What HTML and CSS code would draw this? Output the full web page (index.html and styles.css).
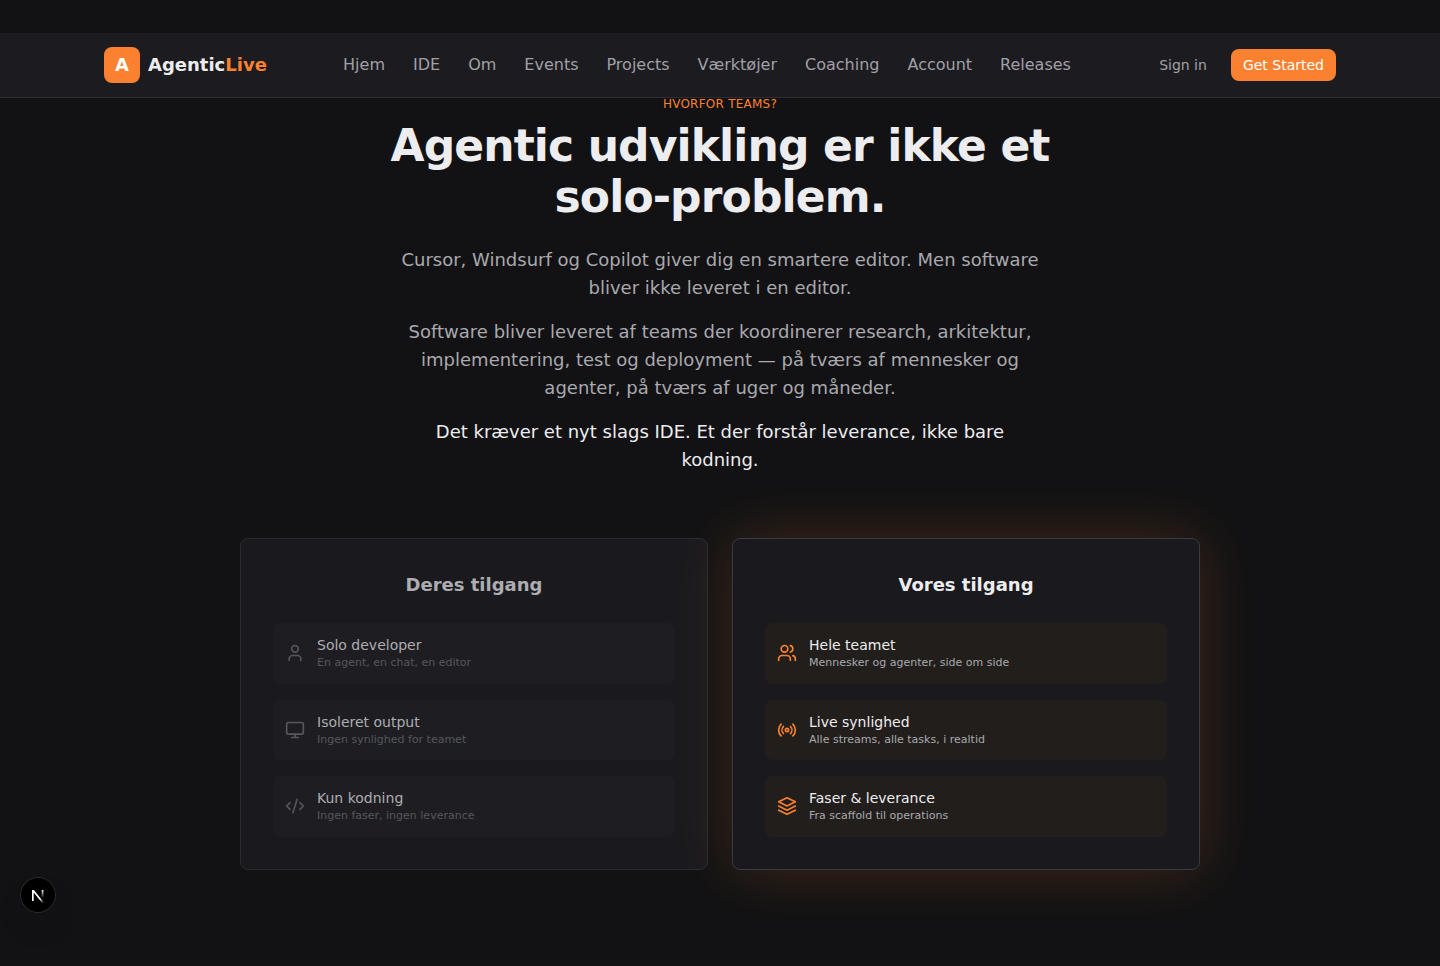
FILE: index.html
```html
<!DOCTYPE html>
<html lang="da">
  <head>
    <meta charset="UTF-8" />
    <meta name="viewport" content="width=device-width, initial-scale=1.0" />
    <title>AgenticLive</title>
    <link rel="stylesheet" href="styles.css">
  </head>

  <body>
    <header class="site-header">
      <div class="header-inner">
        <a href="#" class="brand">
          <span class="brand-mark">A</span>
          <span class="brand-name">Agentic<span class="accent">Live</span></span>
        </a>
        <nav class="main-nav">
          <a href="#">Hjem</a>
          <a href="#">IDE</a>
          <a href="#">Om</a>
          <a href="#">Events</a>
          <a href="#">Projects</a>
          <a href="#">Værktøjer</a>
          <a href="#">Coaching</a>
          <a href="#">Account</a>
          <a href="#">Releases</a>
        </nav>
        <div class="header-actions">
          <button type="button" class="btn btn-ghost">Sign in</button>
          <button type="button" class="btn btn-primary">Get Started</button>
        </div>
      </div>
    </header>

    <main class="why-teams">
      <div class="intro">
        <p class="eyebrow">HVORFOR TEAMS?</p>
        <h1>Agentic udvikling er ikke et solo-problem.</h1>
        <div class="intro-text">
          <p>Cursor, Windsurf og Copilot giver dig en smartere editor. Men software bliver ikke leveret i en editor.</p>
          <p>Software bliver leveret af teams der koordinerer research, arkitektur, implementering, test og deployment — på tværs af mennesker og agenter, på tværs af uger og måneder.</p>
          <p class="strong">Det kræver et nyt slags IDE. Et der forstår leverance, ikke bare kodning.</p>
        </div>
      </div>

      <div class="compare">
        <section class="card card-theirs">
          <h2>Deres tilgang</h2>
          <ul class="features">
            <li class="feature">
              <svg class="icon" viewBox="0 0 24 24"><path d="M19 21v-2a4 4 0 0 0-4-4H9a4 4 0 0 0-4 4v2" /><circle cx="12" cy="7" r="4" /></svg>
              <div>
                <p class="feature-title">Solo developer</p>
                <p class="feature-text">En agent, en chat, en editor</p>
              </div>
            </li>
            <li class="feature">
              <svg class="icon" viewBox="0 0 24 24"><rect x="2" y="3" width="20" height="14" rx="2" /><path d="M8 21h8M12 17v4" /></svg>
              <div>
                <p class="feature-title">Isoleret output</p>
                <p class="feature-text">Ingen synlighed for teamet</p>
              </div>
            </li>
            <li class="feature">
              <svg class="icon" viewBox="0 0 24 24"><path d="m18 16 4-4-4-4M6 8l-4 4 4 4M14.500 4l-5 16" /></svg>
              <div>
                <p class="feature-title">Kun kodning</p>
                <p class="feature-text">Ingen faser, ingen leverance</p>
              </div>
            </li>
          </ul>
        </section>

        <section class="card card-ours">
          <h2>Vores tilgang</h2>
          <ul class="features">
            <li class="feature">
              <svg class="icon" viewBox="0 0 24 24"><path d="M16 21v-2a4 4 0 0 0-4-4H6a4 4 0 0 0-4 4v2" /><circle cx="9" cy="7" r="4" /><path d="M22 21v-2a4 4 0 0 0-3-3.870M16 3.130a4 4 0 0 1 0 7.750" /></svg>
              <div>
                <p class="feature-title">Hele teamet</p>
                <p class="feature-text">Mennesker og agenter, side om side</p>
              </div>
            </li>
            <li class="feature">
              <svg class="icon" viewBox="0 0 24 24"><path d="M4.900 19.100C1 15.200 1 8.800 4.900 4.900M7.800 16.200c-2.300-2.300-2.300-6.100 0-8.500" /><circle cx="12" cy="12" r="2" /><path d="M16.200 7.800c2.300 2.300 2.300 6.100 0 8.500M19.100 4.900C23 8.800 23 15.100 19.100 19" /></svg>
              <div>
                <p class="feature-title">Live synlighed</p>
                <p class="feature-text">Alle streams, alle tasks, i realtid</p>
              </div>
            </li>
            <li class="feature">
              <svg class="icon" viewBox="0 0 24 24"><path d="M12 2 2 7l10 5 10-5-10-5z" /><path d="m2 12 10 5 10-5M2 17l10 5 10-5" /></svg>
              <div>
                <p class="feature-title">Faser &amp; leverance</p>
                <p class="feature-text">Fra scaffold til operations</p>
              </div>
            </li>
          </ul>
        </section>
      </div>
    </main>

    <button type="button" class="dev-badge" aria-label="Dev tools">
      <svg viewBox="0 0 36 36">
        <defs>
          <linearGradient id="stem" x1="0" y1="0" x2="0" y2="1">
            <stop offset="0" stop-color="#fff" />
            <stop offset="1" stop-color="#fff" stop-opacity="0" />
          </linearGradient>
          <linearGradient id="diagonal" gradientUnits="userSpaceOnUse" x1="18" y1="18" x2="23" y2="25">
            <stop offset="0.5" stop-color="#fff" />
            <stop offset="1" stop-color="#fff" stop-opacity="0.2" />
          </linearGradient>
        </defs>
        <path d="M12 24V13h1.900l9.800 12.300-1.300 1L13.700 15.500V24z" fill="url(#diagonal)" />
        <rect x="21.700" y="13" width="1.700" height="8" fill="url(#stem)" />
      </svg>
    </button>
  </body>
</html>
```
FILE: styles.css
```css
* {
  box-sizing: border-box;
}

body {
  margin: 0;
  padding-top: 33px;
  background-color: #121214;
  color: #ededef;
  font-family: "DejaVu Sans", sans-serif;
  font-size: 16px;
  line-height: 24px;
}

h1,
h2,
p,
ul {
  margin: 0;
  padding: 0;
}

a {
  color: inherit;
  text-decoration: none;
}

/* header */
.site-header {
  background-color: #1c1b1f;
  border-bottom: 1px solid #2e2e32;
}

.header-inner {
  display: flex;
  align-items: center;
  justify-content: space-between;
  max-width: 1280px;
  height: 64px;
  margin: 0 auto;
  padding: 0 24px;
}

.brand {
  display: flex;
  align-items: center;
  gap: 8px;
  font-size: 18px;
  font-weight: bold;
  line-height: 28px;
}

.brand-mark {
  display: flex;
  align-items: center;
  justify-content: center;
  width: 36px;
  height: 36px;
  border-radius: 8px;
  background-color: #fa812f;
  color: #fff;
}

.accent {
  color: #fa812f;
}

.main-nav {
  display: flex;
  gap: 28px;
  color: #a0a0a6;
}

.header-actions {
  display: flex;
  gap: 12px;
}

.btn {
  height: 32px;
  padding: 0 12px;
  border: none;
  border-radius: 8px;
  font-family: inherit;
  font-size: 14px;
  cursor: pointer;
}

.btn-ghost {
  background: none;
  color: #a0a0a6;
}

.btn-primary {
  background-color: #fa812f;
  color: #fff;
}

/* intro */
.why-teams {
  padding-bottom: 96px;
}

.intro {
  max-width: 720px;
  margin: 0 auto 64px;
  text-align: center;
}

.eyebrow {
  margin-bottom: 10px;
  color: #fa812f;
  font-size: 12px;
  line-height: 12px;
  letter-spacing: 0.02em;
}

h1 {
  margin-bottom: 24px;
  font-size: 44px;
  line-height: 51px;
  letter-spacing: -0.02em;
}

.intro-text {
  display: flex;
  flex-direction: column;
  gap: 16px;
  max-width: 640px;
  margin: 0 auto;
  color: #a9a9ae;
  font-size: 18px;
  line-height: 28px;
}

.strong {
  color: #ededef;
}

/* comparison cards */
.compare {
  display: grid;
  grid-template-columns: 1fr 1fr;
  gap: 24px;
  max-width: 960px;
  margin: 0 auto;
}

.card {
  padding: 32px;
  border: 1px solid #3a3a40;
  border-radius: 8px;
  background-color: #1a1a1e;
}

.card h2 {
  margin-bottom: 24px;
  font-size: 18px;
  line-height: 28px;
  text-align: center;
}

.features {
  display: flex;
  flex-direction: column;
  gap: 16px;
  list-style: none;
}

.feature {
  display: flex;
  align-items: center;
  gap: 12px;
  padding: 12px;
  border-radius: 8px;
}

.icon {
  flex: none;
  width: 20px;
  height: 20px;
  fill: none;
  stroke: currentColor;
  stroke-width: 2;
  stroke-linecap: round;
  stroke-linejoin: round;
}

.feature-title {
  font-size: 14px;
  line-height: 20px;
}

.feature-text {
  font-size: 11px;
  line-height: 1.5;
}

.card-theirs {
  border-color: #2b2b2f;
}

.card-theirs h2,
.card-theirs .feature-title {
  color: #adadb1;
}

.card-theirs .feature {
  background-color: #1e1e22;
}

.card-theirs .icon,
.card-theirs .feature-text {
  color: #56565b;
}

.card-ours {
  box-shadow: 0 0 60px rgba(250, 129, 47, 0.2);
}

.card-ours .feature {
  background-color: #221e1c;
}

.card-ours .icon {
  color: #fa812f;
}

.card-ours .feature-text {
  color: #a9a9ae;
}

/* floating badge */
.dev-badge {
  position: fixed;
  bottom: 53px;
  left: 20px;
  width: 36px;
  height: 36px;
  padding: 0;
  border: none;
  border-radius: 50%;
  background-color: #000;
  box-shadow: 0 0 0 1px #2a2a2a inset, 0 16px 32px -8px rgba(0, 0, 0, 0.24);
  cursor: pointer;
}

.dev-badge svg {
  display: block;
}
```
